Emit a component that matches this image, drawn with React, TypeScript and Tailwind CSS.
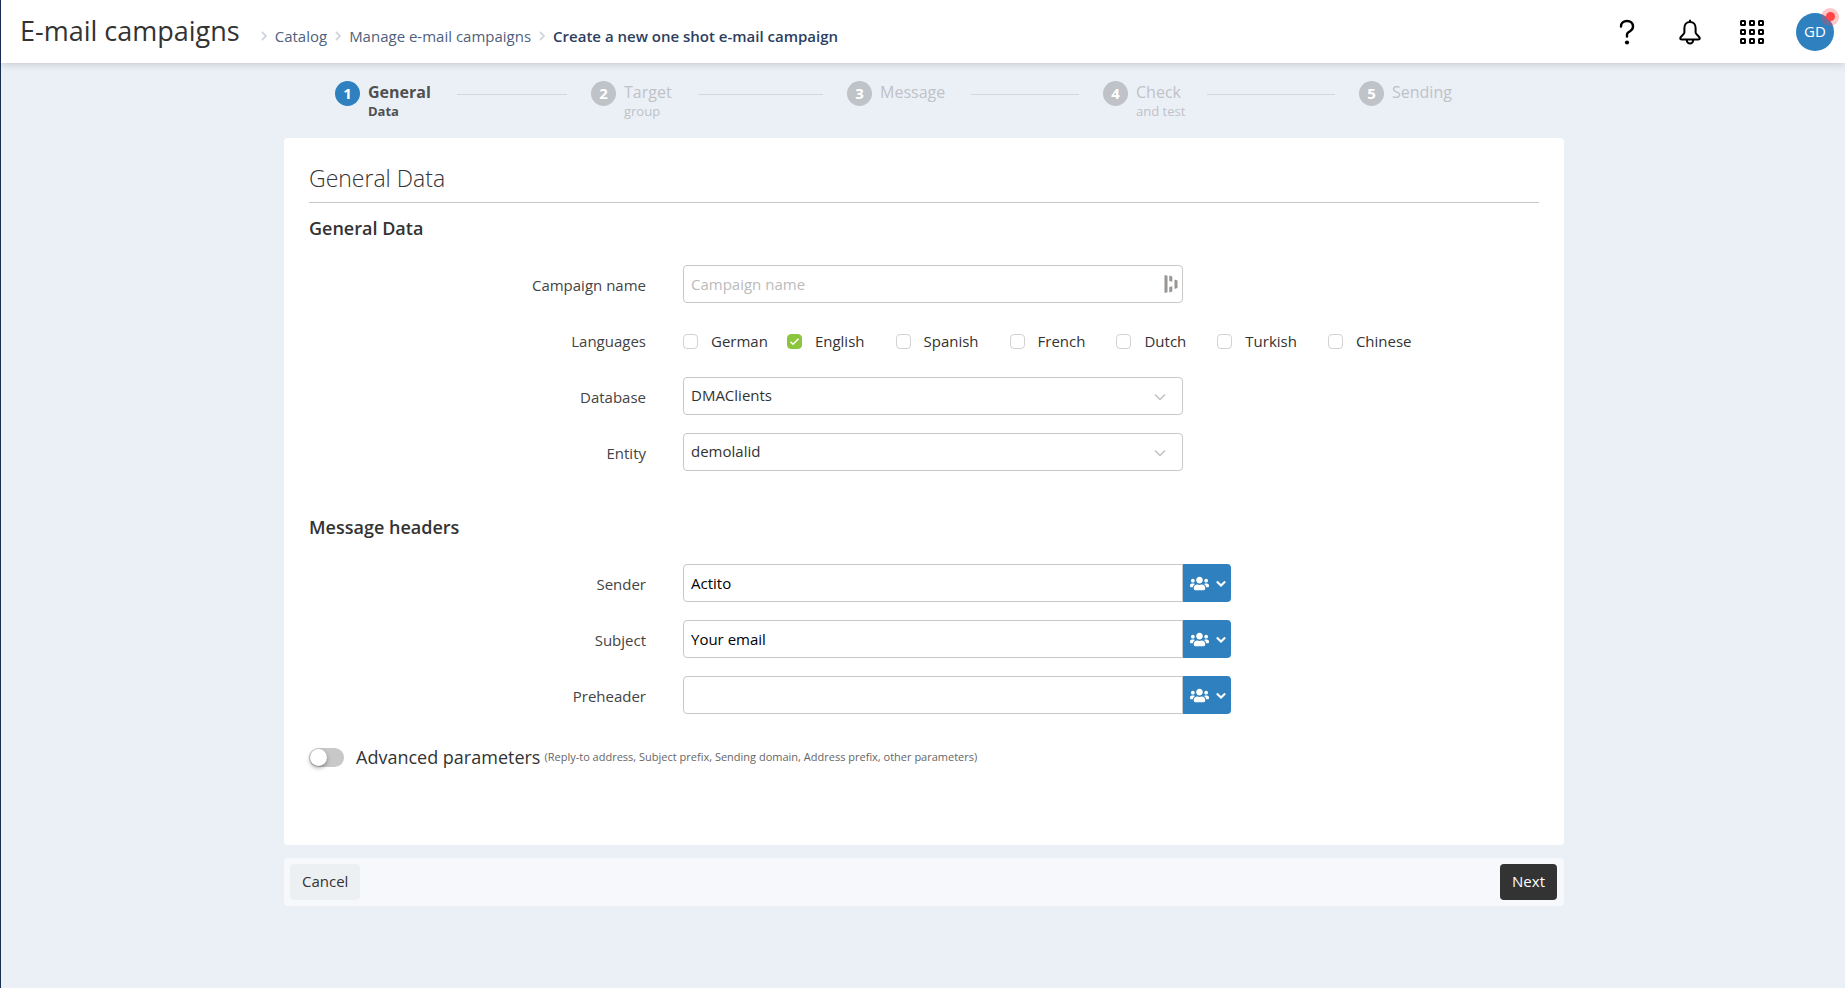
import { useState } from "react";
import { FaUsers } from "react-icons/fa";

const STEPS = [
    { title: "General", subtitle: "Data" },
    { title: "Target", subtitle: "group" },
    { title: "Message" },
    { title: "Check", subtitle: "and test" },
    { title: "Sending" },
];

const LANGUAGES = ["German", "English", "Spanish", "French", "Dutch", "Turkish", "Chinese"];

const GRID_POSITIONS = [1, 10, 19];

function Chevron({ className, width = 2 }: { className?: string; width?: number }) {
    return (
        <svg viewBox="0 0 12 8" fill="none" stroke="currentColor" strokeWidth={width} className={className} aria-hidden="true">
            <path d="M1 1.5 6 6.5 11 1.5" />
        </svg>
    );
}

function BreadcrumbArrow() {
    return (
        <svg viewBox="0 0 6 10" className="h-[10px] w-[6px] text-gray-300" fill="none" stroke="currentColor" strokeWidth="1.8" aria-hidden="true">
            <path d="M1 1 5 5 1 9" />
        </svg>
    );
}

function Header() {
    return (
        <header className="relative z-10 flex h-[63px] items-center justify-between bg-white pl-[19px] pr-[11px] shadow-[0_1px_8px_rgba(0,0,0,0.18)]">
            <div className="flex items-center pb-0.5">
                <h1 className="text-[27px] leading-8 font-medium text-[#333]">E-mail campaigns</h1>
                <nav aria-label="Breadcrumb" className="mt-[10px] ml-[21px] flex items-center gap-2 text-[15px] leading-5 text-[#4f5f7d]">
                    <BreadcrumbArrow />
                    <a href="#catalog">Catalog</a>
                    <BreadcrumbArrow />
                    <a href="#campaigns">Manage e-mail campaigns</a>
                    <BreadcrumbArrow />
                    <span className="font-semibold text-[#2c3e60]">Create a new one shot e-mail campaign</span>
                </nav>
            </div>

            <div className="flex items-center text-black">
                <button type="button" aria-label="Help" className="mr-11">
                    <svg viewBox="0 0 16 26" className="h-[26px] w-4" fill="none" stroke="currentColor" strokeWidth="2.4" strokeLinecap="round">
                        <path d="M2 7.5C2 4 4.5 2 8 2S14 4 14 7.5C14 10 12.6 11.2 11 12.2C9 13.3 8 14 8 15.5V17.5" />
                        <circle cx="8" cy="23.5" r="2.1" fill="currentColor" stroke="none" />
                    </svg>
                </button>
                <button type="button" aria-label="Notifications" className="mr-[39px]">
                    <svg viewBox="0 0 22 26" className="h-[26px] w-[22px]" fill="none" stroke="currentColor" strokeWidth="2" strokeLinejoin="round">
                        <path d="M11 0.8V3M11 3C7.5 3 5.4 5.7 5.4 9V13.5C5.4 15.5 1.3 17 1.3 19.3C1.3 20.3 2 20.5 3 20.5H19C20 20.5 20.7 20.3 20.7 19.3C20.7 17 16.6 15.5 16.6 13.5V9C16.6 5.7 14.5 3 11 3Z" />
                        <path d="M7.8 21C7.8 23 9.2 24.6 11 24.6S14.2 23 14.2 21" />
                    </svg>
                </button>
                <button type="button" aria-label="Applications" className="mr-8">
                    <svg viewBox="0 0 24 24" className="size-6" fill="none" stroke="currentColor" strokeWidth="2">
                        {GRID_POSITIONS.map((y) =>
                            GRID_POSITIONS.map((x) => (
                                <rect key={`${x}-${y}`} x={x} y={y} width="4" height="4" rx="0.5" />
                            ))
                        )}
                    </svg>
                </button>
                <button type="button" aria-label="Account" className="relative size-[38px] rounded-full bg-[#2e80bf] text-[15px] text-white">
                    GD
                    <span className="absolute -top-[5px] -right-[5px] flex size-[18px] items-center justify-center rounded-full bg-[#ff4545]/30">
                        <span className="size-[9px] rounded-full bg-[#ff4545]" />
                    </span>
                </button>
            </div>
        </header>
    );
}

function Stepper() {
    return (
        <ol className="ml-[51px] -mr-[51px] grid h-[75px] grid-cols-5 pt-[18px]">
            {STEPS.map((step, i) => {
                const active = i === 0;
                return (
                    <li key={step.title} className="flex items-start">
                        <span
                            className={`flex size-[25px] items-center justify-center rounded-full text-[15px] font-bold text-white ${
                                active ? "bg-[#2e80bf]" : "bg-[#bfc2c6]"
                            }`}
                        >
                            {i + 1}
                        </span>
                        <span className={`ml-2 ${active ? "font-bold text-[#505050]" : "text-[#bfc2c6]"}`}>
                            <span className="block h-[22px] text-base leading-[22px]">{step.title}</span>
                            <span className="block h-4 w-0 text-[13px] leading-4 whitespace-nowrap">{step.subtitle}</span>
                        </span>
                        {i < STEPS.length - 1 && <span className="mt-[13px] mr-6 ml-[26px] h-px flex-1 bg-[#d3d6da]" />}
                    </li>
                );
            })}
        </ol>
    );
}

function FormLabel({ htmlFor, children }: { htmlFor: string; children: string }) {
    return (
        <label htmlFor={htmlFor} className="mt-0.5 mr-[37px] w-[337px] shrink-0 text-right text-[15px] text-[#444]">
            {children}
        </label>
    );
}

function SelectRow({ id, label, value }: { id: string; label: string; value: string }) {
    return (
        <div className="flex h-[38px] items-center">
            <FormLabel htmlFor={id}>{label}</FormLabel>
            <div className="relative w-full max-w-[500px]">
                <select
                    id={id}
                    defaultValue={value}
                    className="h-[38px] w-full appearance-none rounded border border-[#c8c8c8] bg-white px-[7px] pb-0.5 text-[15px] text-[#333]"
                >
                    <option>{value}</option>
                </select>
                <Chevron width={1.5} className="pointer-events-none absolute top-4 right-4 h-2 w-[14px] text-[#c0c0c0]" />
            </div>
        </div>
    );
}

function HeaderRow({ id, label, value }: { id: string; label: string; value?: string }) {
    return (
        <div className="flex h-[38px] items-center">
            <FormLabel htmlFor={id}>{label}</FormLabel>
            <input
                id={id}
                type="text"
                defaultValue={value}
                className="h-[38px] w-full max-w-[500px] rounded-l border border-[#c8c8c8] px-[7px] text-[15px] text-black"
            />
            <button
                type="button"
                aria-label={`Personalize ${label}`}
                className="flex h-[38px] w-12 shrink-0 items-center gap-[7px] rounded-r bg-[#2e80bf] pl-[7px] text-white"
            >
                <FaUsers size={19} />
                <Chevron width={2.5} className="h-[7px] w-[10px]" />
            </button>
        </div>
    );
}

export default function App() {
    const [languages, setLanguages] = useState<string[]>(["English"]);

    const toggleLanguage = (name: string) => {
        setLanguages((prev) => (prev.includes(name) ? prev.filter((l) => l !== name) : [...prev, name]));
    };

    return (
        <div className="min-h-screen border-l border-[#1b2e58] bg-[#ebf0f7] font-['Open_Sans',sans-serif]">
            <Header />

            <div className="pl-0.5">
                <main className="mx-auto max-w-7xl">
                    <Stepper />

                    <section className="rounded bg-white px-[25px] pt-6 pb-[74px] text-[#333]">
                        <h2 className="border-b border-[#c8c8c8] pb-2 text-[23px] leading-8 font-light">General Data</h2>
                        <h3 className="mt-[11px] text-lg leading-7 font-semibold">General Data</h3>

                        <div className="mt-[23px] flex flex-col gap-[18px]">
                            <div className="flex h-[38px] items-center">
                                <FormLabel htmlFor="name">Campaign name</FormLabel>
                                <div className="relative w-full max-w-[500px]">
                                    <input
                                        id="name"
                                        type="text"
                                        placeholder="Campaign name"
                                        className="h-[38px] w-full rounded border border-[#c8c8c8] px-[7px] text-[15px] placeholder:text-[#bbb]"
                                    />
                                    <svg viewBox="0 0 14 18" className="absolute top-[10px] right-[5px] h-[18px] w-[14px]" fill="#999592" aria-hidden="true">
                                        <path d="M0.5 0 3.5 0.8V17.2L0.5 18ZM5.3 0.5 8.3 1.5V6.8L5.3 6ZM5.3 12 8.3 11.2V16.5L5.3 17.5ZM10.5 4.5 13.5 5.5V13L10.5 14Z" />
                                    </svg>
                                </div>
                            </div>

                            <div role="group" aria-labelledby="languages" className="flex h-[38px] items-center">
                                <span id="languages" className="mt-0.5 mr-[37px] w-[337px] shrink-0 text-right text-[15px] text-[#444]">
                                    Languages
                                </span>
                                <div className="flex items-center gap-x-[31px]">
                                    {LANGUAGES.map((name) => (
                                        <label key={name} className="flex items-center gap-[13px] pt-0.5 text-[15px] first:-mr-3">
                                            <span className="relative flex">
                                                <input
                                                    type="checkbox"
                                                    checked={languages.includes(name)}
                                                    onChange={() => toggleLanguage(name)}
                                                    className="peer size-[15px] appearance-none rounded-[4px] border border-[#d2d2d2] checked:border-[#8cc63f] checked:bg-[#8cc63f]"
                                                />
                                                <svg
                                                    viewBox="0 0 15 15"
                                                    className="pointer-events-none absolute inset-0 hidden peer-checked:block"
                                                    fill="none"
                                                    stroke="white"
                                                    strokeWidth="1.5"
                                                    aria-hidden="true"
                                                >
                                                    <path d="M3.5 7.8 6 10.2 11.5 4.8" />
                                                </svg>
                                            </span>
                                            {name}
                                        </label>
                                    ))}
                                </div>
                            </div>

                            <SelectRow id="database" label="Database" value="DMAClients" />
                            <SelectRow id="entity" label="Entity" value="demolalid" />
                        </div>

                        <h3 className="mt-[42px] text-lg leading-7 font-semibold">Message headers</h3>

                        <div className="mt-[23px] flex flex-col gap-[18px]">
                            <HeaderRow id="sender" label="Sender" value="Actito" />
                            <HeaderRow id="subject" label="Subject" value="Your email" />
                            <HeaderRow id="preheader" label="Preheader" />
                        </div>

                        <label className="mt-[29px] flex items-center">
                            <input
                                type="checkbox"
                                role="switch"
                                className="h-[19px] w-[35px] appearance-none rounded-full bg-[#c8c8c8] p-px before:block before:size-[17px] before:rounded-full before:bg-white before:shadow-[0_2px_4px_rgba(0,0,0,0.35)] checked:bg-[#8cc63f] checked:before:ml-4"
                            />
                            <span className="ml-3 text-lg leading-7">Advanced parameters</span>
                            <span className="ml-1 text-[11px] text-[#666]">
                                (Reply-to address, Subject prefix, Sending domain, Address prefix, other parameters)
                            </span>
                        </label>
                    </section>

                    <footer className="mt-[13px] flex items-center justify-between rounded bg-[#f6f8fc] py-[6px] pr-[7px] pl-[6px] text-[15px]">
                        <button type="button" className="h-9 rounded bg-[#ecf0f3] px-3 pb-0.5 text-[#333]">
                            Cancel
                        </button>
                        <button type="button" className="h-9 rounded bg-[#333] px-3 pb-0.5 font-medium text-white">
                            Next
                        </button>
                    </footer>
                </main>
            </div>
        </div>
    );
}
